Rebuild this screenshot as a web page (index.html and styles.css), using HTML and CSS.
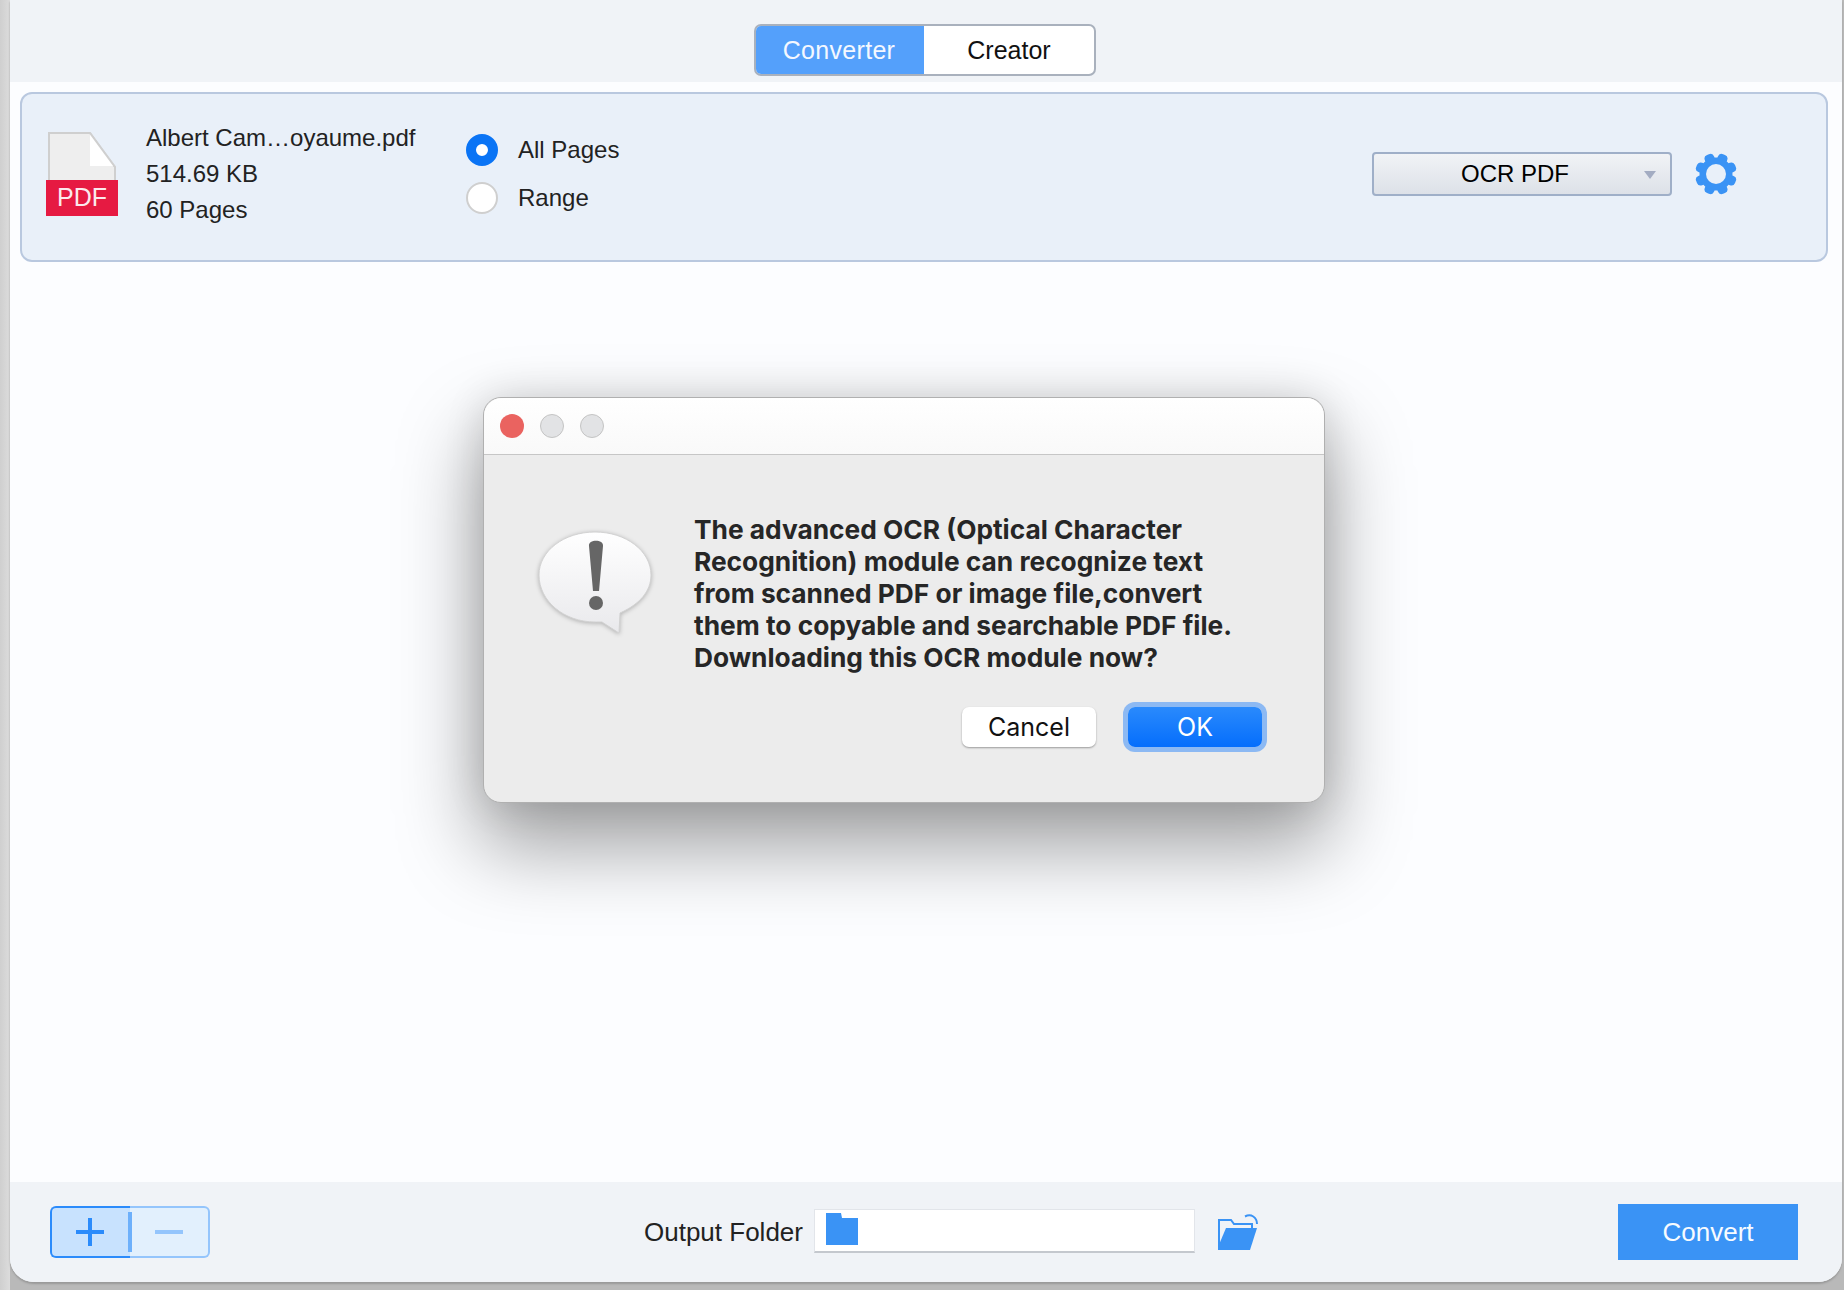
FILE: index.html
```html
<!DOCTYPE html>
<html lang="en">
<head>
  <meta charset="UTF-8" />
  <title>PDF Converter</title>
  <link rel="stylesheet" href="styles.css">
</head>
<body>
  <div class="app-window">
    <div class="top-bar">
      <div class="tabs">
        <div class="tab tab-active">Converter</div>
        <div class="tab">Creator</div>
      </div>
    </div>

    <div class="content">
      <div class="file-card">
        <div class="file-icon">
          <svg class="file-sheet" width="68" height="56" viewBox="0 0 68 56">
            <path d="M1 1H42L67 35V56H1Z" fill="#eeeeee" stroke="#cfcfcf" stroke-width="2"/>
            <path d="M42 1V34H67Z" fill="#ffffff"/>
            <path d="M42 1L67 35" fill="none" stroke="#cfcfcf" stroke-width="2"/>
          </svg>
          <div class="file-badge">PDF</div>
        </div>
        <div class="file-info">
          <div>Albert Cam…oyaume.pdf</div>
          <div>514.69 KB</div>
          <div>60 Pages</div>
        </div>
        <div class="page-options">
          <div class="radio-row">
            <span class="radio radio-on"></span>
            <span>All Pages</span>
          </div>
          <div class="radio-row">
            <span class="radio"></span>
            <span>Range</span>
          </div>
        </div>
        <div class="dropdown">
          <span class="dropdown-label">OCR PDF</span>
          <span class="dropdown-arrow"></span>
        </div>
        <svg class="gear" width="42" height="42" viewBox="0 0 42 42">
          <g fill="#3a93f5" transform="rotate(22.5 21 21)">
            <rect x="16" y="0" width="10" height="42" rx="4"/>
            <rect x="16" y="0" width="10" height="42" rx="4" transform="rotate(45 21 21)"/>
            <rect x="16" y="0" width="10" height="42" rx="4" transform="rotate(90 21 21)"/>
            <rect x="16" y="0" width="10" height="42" rx="4" transform="rotate(135 21 21)"/>
            <circle cx="21" cy="21" r="16.5"/>
          </g>
          <circle cx="21" cy="21" r="10" fill="#e9f0f9"/>
        </svg>
      </div>
    </div>

    <div class="bottom-bar">
      <div class="add-remove">
        <div class="add-btn"><span class="plus"></span></div>
        <div class="remove-btn"><span class="minus"></span></div>
      </div>
      <div class="output-label">Output Folder</div>
      <div class="output-input">
        <svg width="32" height="32" viewBox="0 0 32 32">
          <path d="M0 0H15L16 5H32V32H0Z" fill="#3a93f5"/>
        </svg>
      </div>
      <svg class="open-folder" width="40" height="36" viewBox="0 0 40 36">
        <path d="M1 34V6H13L16 10H34V14" fill="none" stroke="#3a93f5" stroke-width="2"/>
        <path d="M8 14H39L32 36H0V33Z" fill="#3a93f5"/>
        <path d="M27 2.5C33 -0.5 39 3 39 10" fill="none" stroke="#3a93f5" stroke-width="2"/>
      </svg>
      <div class="convert-btn">Convert</div>
    </div>

    <!-- окно поверх основного -->
    <div class="dialog">
      <div class="dialog-title">
        <span class="light light-red"></span>
        <span class="light"></span>
        <span class="light"></span>
      </div>
      <div class="dialog-body">
        <svg class="alert-icon" width="116" height="106" viewBox="0 0 116 106">
          <defs>
            <linearGradient id="bubble" x1="0" y1="0" x2="0" y2="1">
              <stop offset="0" stop-color="#ffffff"/>
              <stop offset="1" stop-color="#e9e9ec"/>
            </linearGradient>
          </defs>
          <path d="M58 2C89 2 114 21 114 45C114 61 103 74 83 83L82 103L65 92C62 92 60 92 58 92C27 92 2 71 2 45C2 21 27 2 58 2Z" fill="url(#bubble)" stroke="#d2d2d2" stroke-width="1"/>
          <path d="M52 16C51 9 67 9 66 16L62 61H56Z" fill="#666666"/>
          <circle cx="59" cy="73" r="7" fill="#666666"/>
        </svg>
        <div class="dialog-main">
          <p class="dialog-text">The advanced OCR (Optical Character<br>Recognition) module can recognize text<br>from scanned PDF or image file,convert<br>them to copyable and searchable PDF file.<br>Downloading this OCR module now?</p>
          <div class="dialog-buttons">
            <div class="btn-cancel">Cancel</div>
            <div class="btn-ok">OK</div>
          </div>
        </div>
      </div>
    </div>
  </div>
</body>
</html>
```

FILE: styles.css
```css
* {
  box-sizing: border-box;
}

html, body {
  margin: 0;
  height: 100%;
}

body {
  width: 1844px;
  height: 1290px;
  overflow: hidden;
  padding: 0 2px 8px 10px;
  font-family: "Liberation Sans", Arial, sans-serif;
  color: #222;
  background: linear-gradient(90deg, #cfcfcf 0, #dcdcdc 10px, #b9b9b9 10px);
}

.app-window {
  position: relative;
  height: 100%;
  display: flex;
  flex-direction: column;
  background: #fcfdff;
  border-radius: 0 0 24px 24px;
  box-shadow: 0 2px 2px #999;
}

/* верхняя панель */
.top-bar {
  height: 82px;
  padding-top: 24px;
  display: flex;
  justify-content: center;
  align-items: flex-start;
  background: #f0f3f7;
}

.tabs {
  width: 342px;
  height: 52px;
  margin-left: -2px;
  display: flex;
  border: 2px solid #a9b1bd;
  border-radius: 7px;
  background: #fff;
  overflow: hidden;
}

.tab {
  flex: 1;
  display: flex;
  align-items: center;
  justify-content: center;
  font-size: 25px;
  color: #111;
}

.tab-active {
  flex: 0 0 170px;
  margin: -2px 0 -2px -2px;
  background: #54a0fb;
  color: #f4f8ff;
  letter-spacing: 0.3px;
}

.content {
  flex: 1;
  padding: 10px 14px 0 10px;
}

/* карточка файла */
.file-card {
  height: 170px;
  display: flex;
  align-items: center;
  padding: 0 0 5px 24px;
  background: #e9f0f9;
  border: 2px solid #b9c8df;
  border-radius: 12px;
}

.file-icon {
  width: 72px;
  display: flex;
  flex-direction: column;
  align-items: center;
  margin-top: -2px;
}

.file-sheet {
  display: block;
  margin-bottom: -8px;
}

.file-badge {
  position: relative;
  width: 72px;
  height: 36px;
  display: flex;
  align-items: center;
  justify-content: center;
  background: #e61a42;
  color: #fbe9ed;
  font-size: 25px;
}

.file-info {
  width: 320px;
  margin-left: 28px;
  margin-top: -2px;
  font-size: 24px;
  line-height: 36px;
}

.page-options {
  display: flex;
  flex-direction: column;
  gap: 16px;
  width: 906px;
  margin-top: -2px;
}

.radio-row {
  height: 32px;
  display: flex;
  align-items: center;
  gap: 20px;
  font-size: 24px;
}

.radio {
  width: 32px;
  height: 32px;
  border-radius: 50%;
  background: #fff;
  border: 2px solid #cfcfcf;
}

.radio-on {
  border: 10px solid #0a74f5;
}

.dropdown {
  width: 300px;
  height: 44px;
  margin-top: -2px;
  display: flex;
  align-items: center;
  justify-content: center;
  position: relative;
  padding-right: 14px;
  background: linear-gradient(#f1f3f6, #dde1e8);
  border: 2px solid #9fafc8;
  border-radius: 4px;
  color: #000;
  font-size: 24px;
}

.dropdown-arrow {
  position: absolute;
  right: 14px;
  top: 17px;
  border-style: solid;
  border-width: 8px 6px 0;
  border-color: #a3acc2 transparent transparent;
}

.gear {
  margin: -2px 0 0 23px;
}

/* нижняя панель */
.bottom-bar {
  height: 100px;
  display: flex;
  align-items: center;
  position: relative;
  padding-left: 40px;
  background: #f0f3f7;
  border-radius: 0 0 24px 24px;
}

.add-remove {
  width: 160px;
  height: 52px;
  display: flex;
}

.add-btn {
  width: 80px;
  display: flex;
  align-items: center;
  justify-content: center;
  padding-right: 2px;
  background: #c8e2fe;
  border: 2px solid #2b8bfb;
  border-right: 0;
  border-radius: 6px 0 0 6px;
  position: relative;
}

.add-btn::after {
  content: "";
  position: absolute;
  right: -2px;
  top: 4px;
  bottom: 4px;
  width: 4px;
  background: #6db0fb;
}

.remove-btn {
  width: 80px;
  display: flex;
  align-items: center;
  justify-content: center;
  background: #e2f0fd;
  border: 2px solid #94c5fc;
  border-left: 0;
  border-radius: 0 6px 6px 0;
}

.plus {
  width: 28px;
  height: 28px;
  background:
    linear-gradient(#2b8bfb, #2b8bfb) center / 28px 4px no-repeat,
    linear-gradient(#2b8bfb, #2b8bfb) center / 4px 28px no-repeat;
}

.minus {
  width: 28px;
  height: 4px;
  background: #94c5fc;
}

.output-label {
  margin-left: 434px;
  font-size: 26px;
  width: 170px;
  white-space: nowrap;
}

.output-input {
  width: 381px;
  height: 44px;
  margin-top: -2px;
  padding: 3px 0 0 11px;
  background: #fff;
  border: 1px solid #e2e5ea;
  border-bottom: 2px solid #c4c8ce;
}

.output-input svg {
  display: block;
}

.open-folder {
  margin-left: 23px;
}

.convert-btn {
  width: 180px;
  height: 56px;
  margin-left: 360px;
  display: flex;
  align-items: center;
  justify-content: center;
  background: #3a93f5;
  color: #f7fbff;
  font-size: 26px;
}

/* диалог */
.dialog {
  position: absolute;
  left: 473px;
  top: 397px;
  width: 842px;
  height: 406px;
  display: flex;
  flex-direction: column;
  background: #ececec;
  border: 1px solid #b0b0b0;
  border-radius: 18px;
  box-shadow: 0 40px 80px 5px rgba(0, 0, 0, 0.36), 0 0 40px rgba(0, 0, 0, 0.12);
}

.dialog-title {
  height: 57px;
  display: flex;
  align-items: center;
  gap: 16px;
  padding-left: 16px;
  background: linear-gradient(#ffffff, #f9f9f9);
  border-bottom: 1px solid #c6c6c6;
  border-radius: 18px 18px 0 0;
}

.light {
  width: 24px;
  height: 24px;
  border-radius: 50%;
  background: #e2e3e5;
  border: 1px solid #c4c4c4;
}

.light-red {
  background: #ea6360;
  border: 0;
}

.dialog-body {
  flex: 1;
  display: flex;
  padding: 75px 0 0 53px;
}

.alert-icon {
  flex: none;
  display: block;
  filter: drop-shadow(0 1px 2px rgba(0, 0, 0, 0.25));
}

.dialog-main {
  margin-left: 41px;
  margin-top: -16px;
}

.dialog-text {
  margin: 0;
  font-family: Inter, "Liberation Sans", sans-serif;
  font-size: 26.3px;
  font-weight: 700;
  line-height: 32px;
  color: #262626;
  white-space: nowrap;
}

.dialog-buttons {
  display: flex;
  align-items: center;
  width: 572px;
  margin-top: 33px;
  padding-left: 268px;
}

.btn-cancel {
  width: 134px;
  height: 40px;
  display: flex;
  align-items: center;
  justify-content: center;
  background: #fff;
  border-radius: 7px;
  box-shadow: 0 1px 2px rgba(0, 0, 0, 0.35);
  font-family: Inter, sans-serif;
  font-size: 25px;
  color: #111;
}

.btn-ok {
  width: 134px;
  height: 40px;
  margin-left: 32px;
  display: flex;
  align-items: center;
  justify-content: center;
  background: linear-gradient(#2a8afc, #056efc);
  border-radius: 7px;
  box-shadow: 0 0 0 5px #8cb9f3;
  font-family: Inter, sans-serif;
  font-size: 25px;
  color: #fff;
}
```
